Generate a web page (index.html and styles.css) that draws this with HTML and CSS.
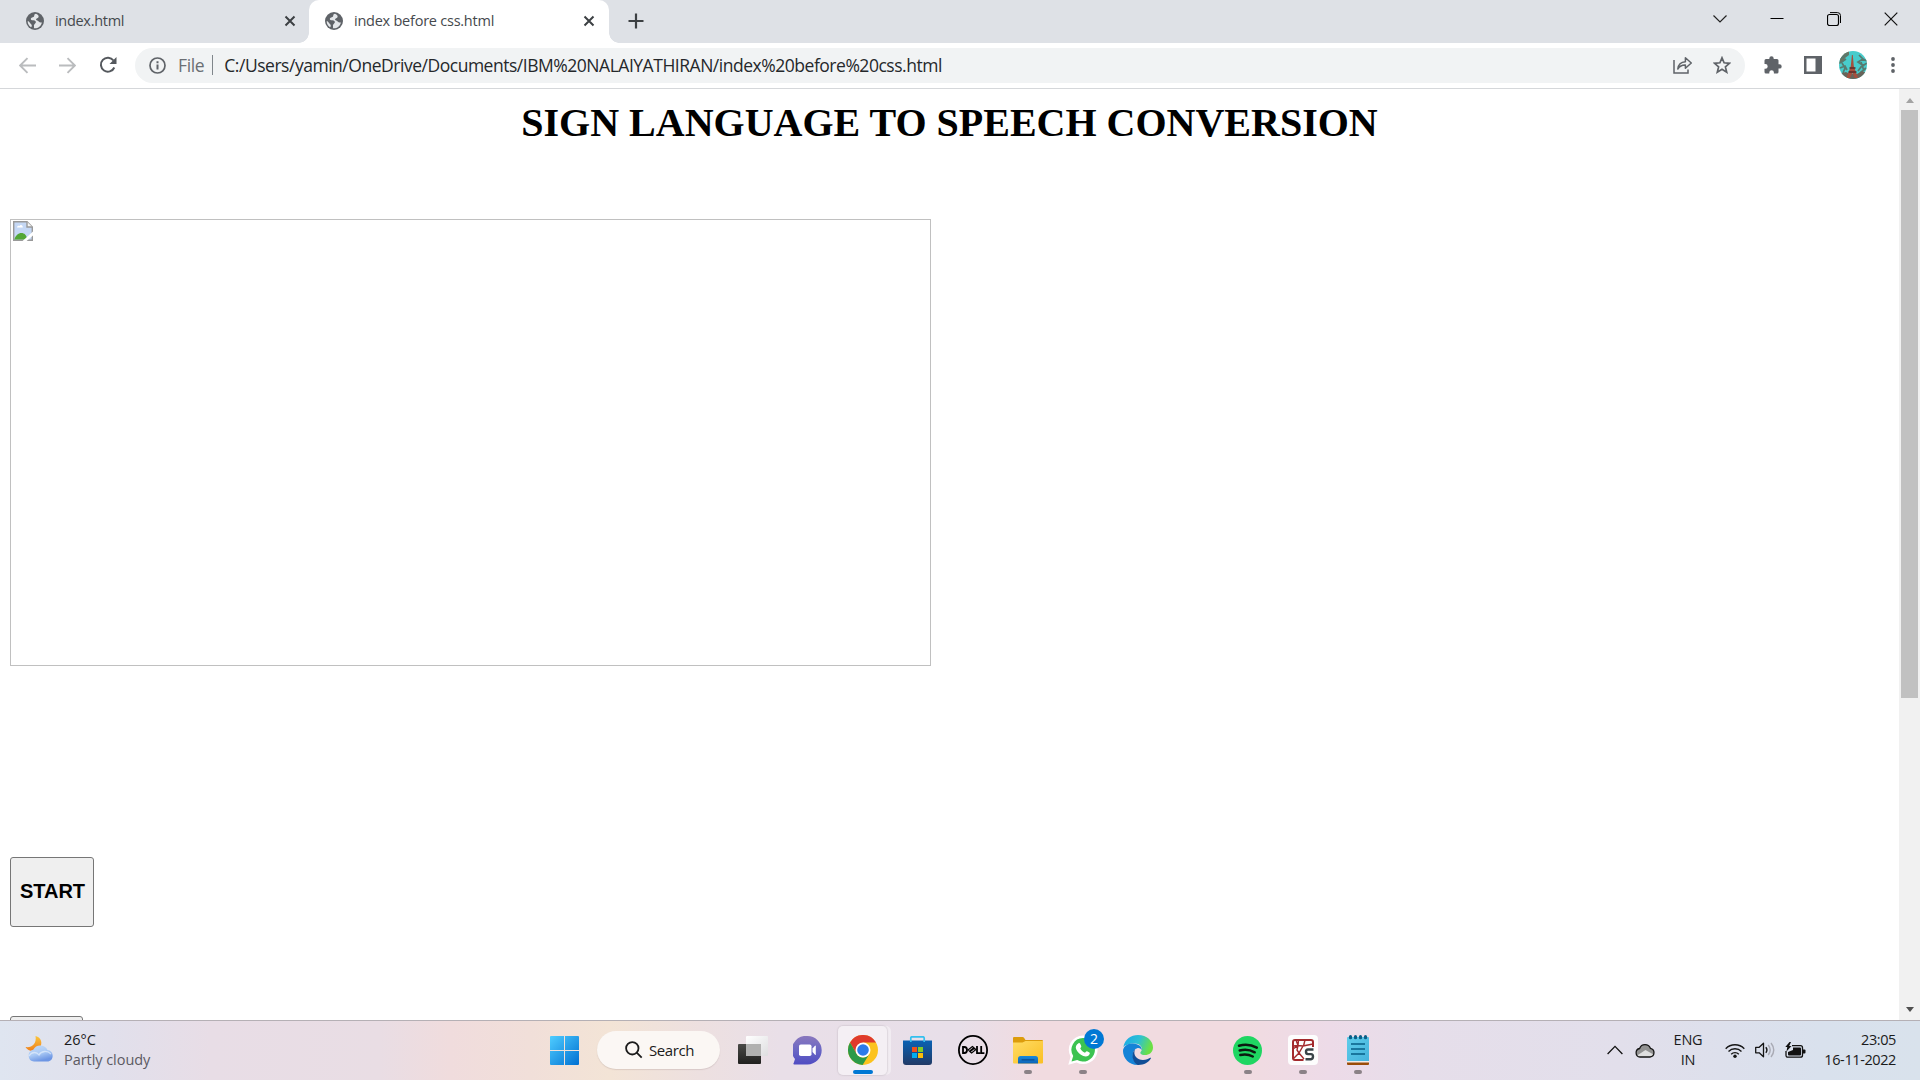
FILE: index.html
```html
<!DOCTYPE html>
<html lang="en">
<head>
<meta charset="utf-8">
<title>index before css.html</title>
<link rel="stylesheet" href="styles.css">
</head>
<body>
<svg width="0" height="0" class="defs" aria-hidden="true">
  <defs>
    <symbol id="globe" viewBox="0 0 18 18"><circle cx="9" cy="9" r="9" fill="#5f6368"/><path d="M10 1.800c-2.600.4-1 2.600-2.600 3.200C5.500 5.600 4.300 6.300 5 7.800c1 1.200 3.600.2 4.600 1.400 1.100 1.300-.9 2.300-1.500 3.500-.5 1 .4 2.700-.3 3.500 4 .5 7.200-2 8.100-5.800-1.200.4-2.500.2-3.200-.9-.7-1.100-2.200-.8-2.700-2 .1-1.500 2.300-1.200 2.600-2.600.2-1.200-.4-2.300-2.600-3.100zM1.700 9c.9.200 1.900 1.100 2.400 2.100.5 1.200 1.900 1.200 1.700 3-.1.800-.6.900-.8 1.200A7.400 7.400 0 0 1 1.700 9z" fill="#e4e7ea"/></symbol>
    <symbol id="close" viewBox="0 0 12 12"><path d="M1.500 1.500l9 9M10.500 1.500l-9 9" stroke="#3c4043" stroke-width="2" fill="none"/></symbol>
  </defs>
</svg>

<header class="tabstrip">
  <div class="tab">
    <svg class="favicon"><use href="#globe"/></svg>
    <span class="tab-title">index.html</span>
    <svg class="tab-close"><use href="#close"/></svg>
  </div>
  <div class="tab tab-active">
    <svg class="favicon"><use href="#globe"/></svg>
    <span class="tab-title tab-title-long">index before css.html</span>
    <svg class="tab-close"><use href="#close"/></svg>
  </div>
  <svg class="new-tab" viewBox="0 0 16 16"><path d="M8 .5v15M.5 8h15" stroke="#3c4043" stroke-width="2.200"/></svg>
  <div class="window-controls">
    <svg width="14" height="8" viewBox="0 0 14 8"><path d="M.5.500L7 7 13.500.500" fill="none" stroke="#222" stroke-width="1.200"/></svg>
    <svg width="14" height="14" viewBox="0 0 14 14"><path d="M.5 6.500h13" stroke="#000"/></svg>
    <svg width="14" height="14" viewBox="0 0 14 14"><rect x=".5" y="2.500" width="11" height="11" rx="2" fill="none" stroke="#000" stroke-width="1.200"/><path d="M3 .6h7.500a3 3 0 0 1 3 3V11" fill="none" stroke="#000"/></svg>
    <svg width="14" height="14" viewBox="0 0 14 14"><path d="M.7.700l12.600 12.600M13.300.700L.7 13.300" stroke="#111" stroke-width="1.200"/></svg>
  </div>
</header>

<nav class="toolbar">
  <svg class="nav-icon" viewBox="0 0 16 16"><path d="M16 8H1.500M8 1L1 8l7 7" fill="none" stroke="#babcbe" stroke-width="1.800"/></svg>
  <svg class="nav-icon" viewBox="0 0 16 16"><path d="M0 8h14.500M8 1l7 7-7 7" fill="none" stroke="#babcbe" stroke-width="1.800"/></svg>
  <svg class="nav-icon nav-reload" viewBox="0 0 18 18"><path d="M15.300 11.500A7 7 0 1 1 14.500 4.500" fill="none" stroke="#54585d" stroke-width="2"/><path d="M17.500 1v7h-7z" fill="#54585d"/></svg>
  <div class="omnibox">
    <svg width="17" height="17" viewBox="0 0 17 17"><circle cx="8.500" cy="8.500" r="7.500" fill="none" stroke="#5f6368" stroke-width="1.700"/><path d="M8.500 7.500v5M8.500 4.300v2" stroke="#5f6368" stroke-width="2"/></svg>
    <span class="scheme">File</span>
    <span class="scheme-divider"></span>
    <span class="url">C:/Users/yamin/OneDrive/Documents/IBM%20NALAIYATHIRAN/index%20before%20css.html</span>
    <svg class="share" width="20" height="18" viewBox="0 0 20 18"><path d="M1 4v13h14v-3.500" fill="none" stroke="#5f6368" stroke-width="1.500"/><path d="M4.800 13c.5-4.600 3-7 7.600-7.300V1.800L18.300 7l-5.900 5.200V9c-3.500-.2-5.600 1-7.600 4z" fill="none" stroke="#5f6368" stroke-width="1.500" stroke-linejoin="round"/></svg>
    <svg class="star" width="18" height="18" viewBox="0 0 18 18"><path d="M9 1.800l2.100 5 5.400.5-4.100 3.600 1.300 5.300L9 13.300l-4.700 2.900 1.300-5.300L1.500 7.300l5.400-.5z" fill="none" stroke="#5f6368" stroke-width="1.700"/></svg>
  </div>
  <svg class="ext" width="18" height="18" viewBox="0 0 18 18"><path d="M5.300 2.500a2.200 2.200 0 0 1 4.400 0v.6h3.300q1.500 0 1.500 1.500v3.600h1a2.200 2.200 0 0 1 0 4.400h-1V16q0 1.500-1.500 1.500H9.900v-1a2.300 2.300 0 0 0-4.600 0v1H2q-1.500 0-1.500-1.500v-3.200h.8a2.400 2.400 0 0 0 0-4.800H.5V4.600q0-1.500 1.500-1.500h3.300z" fill="#5f6368"/></svg>
  <svg class="panel" width="18" height="18" viewBox="0 0 18 18"><path fill-rule="evenodd" d="M0 0h18v18H0zM2.500 2.500v13h9v-13z" fill="#5f6368"/></svg>
  <svg class="avatar" width="28" height="28" viewBox="0 0 28 28">
    <defs><clipPath id="round"><circle cx="14" cy="14" r="14"/></clipPath></defs>
    <g clip-path="url(#round)">
      <rect width="28" height="28" fill="#48cccc"/>
      <path d="M2 3l8-3 0 4-4 3-1 3-5 3z" fill="#6d7460"/>
      <path d="M1 8l8-5M1 12l6-4M1 17l5-2 2 4M3 12l3 5-2 5M20 4l4 4 4 2M24 8l-5 3 6 4M28 12l-6 4-3 4M27 17l-6 5M22 11l3 9" fill="none" stroke="#567a70" stroke-width="1.700"/>
      <path d="M0 23l7-2 4 2h7l5-3 5 2v6H0z" fill="#68645a"/>
      <path d="M12.900 4h.9l1 11 4.200 12h-3.200l-2.300-5-2.500 5H7.500l4.300-12z" fill="#a4503e"/>
      <path d="M10.500 17h6M9.500 21h8" stroke="#5b2d2a" stroke-width="1.300"/>
    </g>
  </svg>
  <svg class="menu" width="4" height="16" viewBox="0 0 4 16"><circle cx="2" cy="2" r="1.900" fill="#5f6368"/><circle cx="2" cy="8" r="1.900" fill="#5f6368"/><circle cx="2" cy="14" r="1.900" fill="#5f6368"/></svg>
</nav>

<main class="viewport">
  <div class="page">
    <h1 class="heading">SIGN LANGUAGE TO SPEECH CONVERSION</h1>
    <div class="missing-image">
      <svg width="20" height="20" viewBox="0 0 20 20">
        <path d="M.7.700h13.300l5.300 5.300v13.300H.7z" fill="#c5d8f5" stroke="#999" stroke-width="1.400"/>
        <path d="M4 6.500c0-2 2-2 2.500-1.500C7.500 3 10 4 9.800 6.500z" fill="#fff"/>
        <path d="M1.400 18.600c1-4 4-6.500 7-6.500s5 2 6 6.500z" fill="#52a736"/>
        <path d="M14 .7V6h5.300" fill="#f5f5f5" stroke="#999" stroke-width="1.400"/>
        <path d="M20.500 10L9 20.500h4l7.500-6.300z" fill="#fff"/>
      </svg>
    </div>
    <button class="btn">START</button>
    <button class="btn btn-next"></button>
  </div>
  <aside class="scrollbar">
    <span class="arrow-up"></span>
    <span class="thumb"></span>
    <span class="arrow-down"></span>
  </aside>
</main>

<footer class="taskbar">
  <div class="weather">
    <svg width="30" height="28" viewBox="0 0 30 28">
      <defs>
        <linearGradient id="moon" x2="0" y2="1"><stop stop-color="#fbc63c"/><stop offset="1" stop-color="#ee7f1d"/></linearGradient>
        <linearGradient id="cloud" x2=".4" y2="1"><stop stop-color="#c6dcf8"/><stop offset=".6" stop-color="#a8c8f4"/><stop offset="1" stop-color="#6d96e4"/></linearGradient>
      </defs>
      <path d="M10.500 1c6 1 7.500 8 4 12-3.500 4-11 4.500-14-1 6 1 11.500-3 10-11z" fill="url(#moon)"/>
      <path d="M9 26.500a6 6 0 0 1-.8-11.800A8 8 0 0 1 22.500 15a5.900 5.900 0 0 1 1 11.500z" fill="url(#cloud)"/>
      <path d="M4 21c3-5 8-4 10-1 2-4 8-5 12-1" fill="none" stroke="#e2eefc" stroke-width="1.300" opacity=".7"/>
    </svg>
    <div class="weather-text"><span>26°C</span><span class="muted">Partly cloudy</span></div>
  </div>

  <div class="apps">
    <div class="slot">
      <svg width="29" height="29" viewBox="0 0 29 29"><defs><linearGradient id="win" x2="1" y2="1"><stop stop-color="#4fcdff"/><stop offset="1" stop-color="#0070d2"/></linearGradient></defs><path d="M1 0h13v14H0V1a1 1 0 0 1 1-1zM15 0h13a1 1 0 0 1 1 1v13H15zM0 15h14v14H1a1 1 0 0 1-1-1zM15 15h14v13a1 1 0 0 1-1 1H15z" fill="url(#win)"/></svg>
    </div>
    <div class="search">
      <svg width="18" height="18" viewBox="0 0 18 18"><circle cx="7.300" cy="7.300" r="6.200" fill="none" stroke="#1b1b1b" stroke-width="1.800"/><path d="M11.700 11.700l5 5" stroke="#1b1b1b" stroke-width="1.800"/></svg>
      <span>Search</span>
    </div>
    <div class="slot">
      <svg width="30" height="28" viewBox="0 0 30 28"><defs><linearGradient id="tv" x2="0" y2="1"><stop stop-color="#4a4a47"/><stop offset="1" stop-color="#20201e"/></linearGradient><linearGradient id="tw" x2="1" y2="1"><stop stop-color="#fff"/><stop offset="1" stop-color="#dedee0"/></linearGradient></defs><rect y="8" width="23" height="20" rx="1" fill="url(#tv)"/><rect x="8" width="22" height="20" rx="1" fill="url(#tw)"/><path d="M8 8h15v12H8z" fill="#b1b1b0"/></svg>
    </div>
    <div class="slot">
      <svg width="29" height="29" viewBox="0 0 29 29"><defs><linearGradient id="chat" x2="0" y2="1"><stop stop-color="#8a78bd"/><stop offset=".5" stop-color="#6a67c4"/><stop offset="1" stop-color="#504cc2"/></linearGradient></defs><path d="M14.500 0a14.200 14.200 0 0 1 0 28.400H1.200c-1 0-1-1-.4-1.600L2 23A14.200 14.200 0 0 1 14.500 0z" fill="url(#chat)"/><rect x="6" y="8.500" width="12.500" height="11.500" rx="1.800" fill="#fff"/><path d="M19.500 12.500l2.500-2.700q.8-.6.800.5v8q0 1-.8.400l-2.500-2.600z" fill="#fff"/></svg>
    </div>
    <div class="slot active-slot">
      <svg width="30" height="30" viewBox="0 0 30 30"><circle cx="15" cy="15" r="15" fill="#fcc31e"/><path d="M2 7.500l6.500 11.250L15 15V7.500h13A15 15 0 0 0 2 7.500z" fill="#df3a2c"/><path d="M2 7.500A15 15 0 0 0 14.600 30l6.900-11.200A7.500 7.500 0 0 1 8.500 18.700z" fill="#2c9a48"/><circle cx="15" cy="15" r="7.500" fill="#fff"/><circle cx="15" cy="15" r="5.800" fill="#2c7bea"/></svg>
    </div>
    <div class="slot">
      <svg width="29" height="29" viewBox="0 0 29 29"><defs><linearGradient id="store" x2="0" y2="1"><stop stop-color="#0a62b4"/><stop offset="1" stop-color="#213a66"/></linearGradient></defs><path d="M0 4.500h29V26a3 3 0 0 1-3 3H3a3 3 0 0 1-3-3z" fill="url(#store)"/><path d="M7.800 6V2q0-1.200 1.200-1.200h11Q21.200.8 21.200 2v4" fill="none" stroke="#34c0ee" stroke-width="1.700"/><path d="M9 11h5v5H9z" fill="#f1511b"/><path d="M15 11h5v5h-5z" fill="#80cc28"/><path d="M9 17h5v5H9z" fill="#00adef"/><path d="M15 17h5v5h-5z" fill="#fbbc09"/></svg>
    </div>
    <div class="slot">
      <svg width="30" height="30" viewBox="0 0 30 30"><circle cx="15" cy="15" r="14.100" fill="none" stroke="#000" stroke-width="1.800"/><path d="M5 12v6h1.300c3.600 0 3.600-6 0-6z" fill="none" stroke="#000" stroke-width="1.800"/><path d="M19 11v7.200h3.200M23.200 11v7.200h3.200" fill="none" stroke="#000" stroke-width="1.800"/><path d="M10 15l4.400-3.500 1.400 1.100-4.400 3.500zM12 16.800l4.400-3.500 1.600 1.200-4.400 3.500z" fill="none" stroke="#000" stroke-width="1.100"/></svg>
    </div>
    <div class="slot running">
      <svg width="30" height="27" viewBox="0 0 30 27"><defs><linearGradient id="fold" x2="1" y2="1"><stop stop-color="#ffdc65"/><stop offset="1" stop-color="#fabf23"/></linearGradient><linearGradient id="pocket" x2="0" y2="1"><stop stop-color="#1689dc"/><stop offset="1" stop-color="#0d63b6"/></linearGradient></defs><path d="M0 1q0-1 1-1h8.500q1 0 1.500.8L12.500 3H29q1 0 1 1v5H0z" fill="#dc9c0c"/><path d="M0 5.500h9.500L12.500 4H30v21.500q0 1-1 1H1q-1 0-1-1z" fill="url(#fold)"/><path d="M5 26.500v-5q0-2.500 2.500-2.500h15q2.500 0 2.500 2.500v5z" fill="url(#pocket)"/><path d="M9 22.800h12" stroke="#0a4c91" stroke-width="1.200" stroke-linecap="round"/></svg>
    </div>
    <div class="slot running">
      <svg width="30" height="30" viewBox="0 0 30 30"><path d="M15 .5a14.300 14.300 0 1 1-6.500 26.900L.3 29.800l2.300-8A14.300 14.300 0 0 1 15 .5z" fill="#fff"/><path d="M15 3a11.800 11.800 0 1 1-5.800 22l-5.700 1.600L5.200 21A11.800 11.800 0 0 1 15 3z" fill="#3cc351"/><path d="M10.500 8.300c1.200-.6 1.700 0 2.700 2.800.3 1-.4 1.400-1 2.200 1 2.200 2.600 3.600 4.800 4.500.8-.8 1.200-1.800 2-1.500 2.500 1.100 3 1.500 2.800 2.200-.7 2.900-3.800 3.600-6.500 2.500-3.500-1.500-5.600-3.700-7-6.500-1.200-2.300-.2-5 2.200-6.200z" fill="#fff"/></svg>
      <span class="badge">2</span>
    </div>
    <div class="slot">
      <svg width="30" height="30" viewBox="0 0 30 30"><defs><linearGradient id="edge" x2="1" y2=".3"><stop stop-color="#1aa7e8"/><stop offset=".55" stop-color="#2dc0d4"/><stop offset="1" stop-color="#6be045"/></linearGradient></defs><path d="M.3 12C2 4 8 0 15 0c9 0 15 6 15 12.500 0 5-4 7.500-8 7.500-4.500 0-5.500-2-4-3.500 2.500-3 0-8-6.500-8C6 8.500 1.500 10.500.3 12z" fill="url(#edge)"/><path d="M0 16c0-4 4-7.500 9.500-7.500 6.500 0 10 4 9.100 6.500-1.200-2.500-4.300-2.700-6.600-.5-4 4-2 11 2.500 15.500C6 30 0 23 0 16z" fill="#1583d7"/><path d="M12 14.500c-2.500 6 2.500 10.500 8 10.500 3.200 0 5.500-1.200 7.200-2.200.6-.3 1 .2.600.8C25.500 27.500 21 30 15.500 30h-1C9 26.500 8 18.500 12 14.500z" fill="#114e96"/></svg>
    </div>
    <div class="slot"></div>
    <div class="slot running">
      <svg width="29" height="29" viewBox="0 0 29 29"><circle cx="14.500" cy="14.500" r="14.500" fill="#1fd662"/><path d="M6 9.700c6-1.700 12.500-1 17.800 2M6.700 14.500c5.300-1.500 10.500-.8 15 1.800M7.300 19c4.500-1.200 8.700-.6 12.500 1.500" fill="none" stroke="#0b1a10" stroke-width="2.500" stroke-linecap="round"/></svg>
    </div>
    <div class="slot running">
      <svg width="30" height="30" viewBox="0 0 30 30"><rect width="30" height="30" rx="4" fill="#fdfdfd"/><path d="M15.500 25H7q-2 0-2-2V7q0-2 2-2h16q2 0 2 2v5" fill="none" stroke="#a32a2d" stroke-width="2"/><path d="M5 11l5-.5 5 .5 10-2M10.500 5l-.5 5.500L5 14M17 5l-1.500 6M15 11l-4 7-6 6M11 18l5 6M10 10.500l-1 4.500 2 3M8 5l2 5.500" fill="none" stroke="#a32a2d" stroke-width="1.400"/><path d="M25.500 14.500h-5.500q-2 0-2 2.300t2 2.300h3q2 0 2 2.500t-2 2.600h-5.500" fill="none" stroke="#3a4348" stroke-width="2.400"/></svg>
    </div>
    <div class="slot running">
      <svg width="22" height="30" viewBox="0 0 22 30"><defs><linearGradient id="note" x2="1" y2="1"><stop stop-color="#5fcdea"/><stop offset="1" stop-color="#45b2dc"/></linearGradient></defs><path d="M0 27h22v2q0 1-1 1H1q-1 0-1-1z" fill="#9a4c08"/><path d="M0 25h22v2.500H0z" fill="#f0ebe8"/><path d="M0 3q0-1 1-1h20q1 0 1 1v23H0z" fill="url(#note)"/><path d="M4 9h14M4 14h14M4 19h14" stroke="#075f86" stroke-width="1.600"/><path d="M3.500 1.700v1M8.500 1.700v1M13.500 1.700v1M18.500 1.700v1" stroke="#0b5f87" stroke-width="3.200" stroke-linecap="round"/></svg>
    </div>
  </div>

  <div class="tray">
    <svg class="chevron" width="16" height="10" viewBox="0 0 16 10"><path d="M.6 9L8 1.400 15.400 9" fill="none" stroke="#111" stroke-width="1.300"/></svg>
    <svg class="onedrive" width="20" height="15" viewBox="0 0 20 15"><path d="M5 14a4.300 4.300 0 0 1-.4-8.500 5.800 5.800 0 0 1 10.800-.2A4.400 4.400 0 0 1 15 14z" fill="#929292"/><path d="M2 12.500L10.500 7l8 4.500Q18 14 15 14H5q-2 0-3-1.500z" fill="#dfdfdf"/><path d="M5 14a4.300 4.300 0 0 1-.4-8.500 5.800 5.800 0 0 1 10.800-.2A4.400 4.400 0 0 1 15 14z" fill="none" stroke="#151515" stroke-width="1.300"/></svg>
    <div class="language"><span>ENG</span><span>IN</span></div>
    <svg class="wifi" width="20" height="15" viewBox="0 0 20 15"><path d="M.7 5.700a13 13 0 0 1 18.600 0M3.500 8.500a9.200 9.200 0 0 1 13 0M6.200 11.200a5.400 5.400 0 0 1 7.600 0" fill="none" stroke="#151515" stroke-width="1.400"/><circle cx="10" cy="13.300" r="1.700" fill="#151515"/></svg>
    <svg class="speaker" width="20" height="16" viewBox="0 0 20 16"><path d="M.7 5.300h3.500L8.500 1.200v13.600l-4.300-4H.7z" fill="none" stroke="#151515" stroke-width="1.300" stroke-linejoin="round"/><path d="M10.800 5.200q2.300 2.800 0 5.600" fill="none" stroke="#151515" stroke-width="1.400"/><path d="M13.200 3q4 5 0 10M16 1q5.500 7 0 14" fill="none" stroke="#a9aab4" stroke-width="1.400"/></svg>
    <svg class="battery" width="21" height="16" viewBox="0 0 21 16"><path d="M7 3.700h8.500q2 0 2 2v7.500q0 2-2 2H3q-2 0-2-2V9" fill="none" stroke="#111" stroke-width="1.300"/><path d="M8 5.500h7q1 0 1 1v6q0 1-1 1H4q-1 0-1-1V10l5-2z" fill="#111"/><path d="M18 7.500h1.500q1 0 1 1v2q0 1-1 1H18z" fill="#111"/><path d="M4.500 0L.3 5h2L1.500 9.500l5-5.500H4.200L6 0z" fill="#111"/></svg>
    <div class="clock"><span>23:05</span><span>16-11-2022</span></div>
  </div>
</footer>
</body>
</html>
```
FILE: styles.css
```css
* { box-sizing: border-box; }

body {
  margin: 0;
  width: 1920px;
  height: 1080px;
  overflow: hidden;
  display: flex;
  flex-direction: column;
  background: #fff;
  font-family: "Open Sans", "Noto Sans", sans-serif;
}

svg { display: block; flex: none; }
.defs { position: absolute; }

/* Tab strip */
.tabstrip {
  height: 43px;
  flex: none;
  display: flex;
  align-items: center;
  background: #dee1e6;
}
.tab {
  width: 309px;
  height: 43px;
  display: flex;
  align-items: center;
  padding: 0 13px 2px 26px;
}
.tab-active {
  position: relative;
  width: 300px;
  padding: 0 14px 2px 16px;
  background: #fff;
  border-radius: 10px 10px 0 0;
}
.tab-active::before,
.tab-active::after {
  content: "";
  position: absolute;
  bottom: 0;
  width: 10px;
  height: 10px;
}
.tab-active::before {
  left: -10px;
  background: radial-gradient(circle at 0 0, transparent 9.500px, #fff 10px);
}
.tab-active::after {
  right: -10px;
  background: radial-gradient(circle at 100% 0, transparent 9.500px, #fff 10px);
}
.favicon { width: 18px; height: 18px; }
.tab-title {
  flex: 1;
  margin-left: 11px;
  font-size: 14.500px;
  letter-spacing: -0.300px;
  color: #45494d;
  white-space: nowrap;
}
.tab-title-long { letter-spacing: -0.240px; }
.tab-close { width: 12px; height: 12px; }
.new-tab { width: 16px; height: 16px; margin: 0 0 1px 19px; }
.window-controls {
  margin-left: auto;
  padding: 0 22px 6px 0;
  display: flex;
  align-items: center;
  gap: 43px;
}

/* Toolbar */
.toolbar {
  height: 46px;
  flex: none;
  display: flex;
  align-items: center;
  padding: 0 25px 1px 19px;
  border-bottom: 1px solid #d5d7da;
}
.nav-icon { width: 17px; height: 17px; margin-right: 23px; }
.nav-reload { width: 18px; height: 18px; margin-right: 18px; }
.omnibox {
  width: 1610px;
  height: 35px;
  display: flex;
  align-items: center;
  padding: 0 14px;
  border-radius: 18px;
  background: #f1f3f4;
  font-size: 17.500px;
  white-space: nowrap;
}
.scheme { margin-left: 12px; color: #6a6e73; letter-spacing: -0.350px; }
.scheme-divider { width: 1px; height: 20px; margin: 0 11px 0 8px; background: #80868b; }
.url { color: #25282b; letter-spacing: -0.475px; }
.share { margin-left: auto; margin-right: 20px; }
.ext { margin-left: 19px; }
.panel { margin-left: 22px; }
.avatar { margin-left: 17px; }
.menu { margin-left: auto; }

/* Page */
.viewport { flex: 1; min-height: 0; display: flex; overflow: hidden; }
.page {
  flex: 1;
  padding: 10px 0 0 10px;
  display: flex;
  flex-direction: column;
  align-items: flex-start;
}
.heading {
  align-self: stretch;
  flex: none;
  margin: 0 10px 73px 0;
  text-align: center;
  font: bold 40px/47px "Liberation Serif", serif;
  color: #000;
}
.missing-image {
  flex: none;
  width: 921px;
  height: 447px;
  padding: 1px 2px;
  border: 1px solid #c0c0c0;
}
.btn {
  flex: none;
  width: 84px;
  height: 70px;
  margin: 191px 0 0;
  padding: 0 0 1px 1px;
  border: 1px solid #767676;
  border-radius: 3px;
  background: #efefef;
  color: #000;
  font: bold 20px "Liberation Sans", sans-serif;
}
.btn-next { width: 73px; margin-top: 89px; }

.scrollbar {
  width: 21px;
  display: flex;
  flex-direction: column;
  align-items: center;
  background: #f1f1f1;
}
.arrow-up, .arrow-down { border: 4.500px solid transparent; border-top-width: 0; }
.arrow-up { margin-top: 9px; border-bottom: 5px solid #a3a3a3; }
.thumb { width: 17px; height: 588px; margin-top: 7px; background: #c1c1c1; }
.arrow-down {
  margin: auto 0 8px;
  border-bottom-width: 0;
  border-top: 5px solid #505050;
}

/* Taskbar */
.taskbar {
  height: 60px;
  flex: none;
  display: grid;
  grid-template-columns: 537px 1fr 320px;
  border-top: 1px solid #b5b0b5;
  background: linear-gradient(90deg, #dfe5f0 0, #e1e0ec 110px, #e8dde6 210px, #e9dde4 380px, #f0dcdd 450px, #f1dfd9 530px, #f3e4d6 610px, #ede0e0 700px, #e9dfe8 780px, #e8dfe9 960px, #f1dbe0 1040px, #f1dbe0 1240px, #eddbe8 1330px, #e6deea 1420px, #e2dfeb 1620px, #d9e1ed 1820px, #d9e2ec 1920px);
  color: #1b1b1b;
  font-size: 14.500px;
  letter-spacing: -0.200px;
}
.weather {
  display: flex;
  align-items: center;
  gap: 9px;
  padding: 0 0 3px 25px;
}
.weather-text, .language, .clock {
  display: flex;
  flex-direction: column;
  line-height: 20px;
}
.weather-text { padding-top: 1px; letter-spacing: -0.050px; }
.muted { color: #5c5a62; }
.apps { display: flex; align-items: center; }
.slot {
  position: relative;
  width: 55px;
  height: 59px;
  display: flex;
  align-items: center;
  justify-content: center;
  padding-bottom: 1px;
}
.running::after {
  content: "";
  position: absolute;
  left: 24px;
  bottom: 6px;
  width: 8px;
  height: 4px;
  border-radius: 2px;
  background: #8b8287;
}
.active-slot::before {
  content: "";
  position: absolute;
  inset: 5px 3px;
  border-radius: 5px;
  background: rgba(255, 255, 255, .5);
  box-shadow: 0 0 1px 1px rgba(190, 180, 190, .35), 4px 0 0 rgba(255, 255, 255, .4);
}
.active-slot::after {
  content: "";
  position: absolute;
  left: 18px;
  bottom: 6px;
  width: 20px;
  height: 4px;
  border-radius: 2px;
  background: #0078d4;
}
.active-slot svg { position: relative; }
.search {
  width: 123px;
  height: 38px;
  margin: 0 5px 1px;
  padding: 0 0 1px 28px;
  display: flex;
  align-items: center;
  gap: 6px;
  border-radius: 19px;
  background: #fbf7f4;
  box-shadow: 0 1px 1px rgba(150, 130, 130, .25);
  font-size: 15px;
  letter-spacing: -0.400px;
}
.badge {
  position: absolute;
  left: 29px;
  top: 8px;
  width: 20px;
  height: 20px;
  border-radius: 50%;
  background: #0078d4;
  color: #fff;
  font-size: 14px;
  line-height: 20px;
  text-align: center;
}
.tray { display: flex; align-items: center; padding: 0 24px 1px 7px; }
.onedrive { margin-left: 12px; }
.language { width: 40px; margin-left: 13px; align-items: center; }
.wifi { margin-left: 17px; }
.speaker { margin-left: 10px; }
.battery { margin-left: 10px; }
.clock { margin-left: auto; align-items: flex-end; padding-bottom: 1px; letter-spacing: -0.400px; }
```
